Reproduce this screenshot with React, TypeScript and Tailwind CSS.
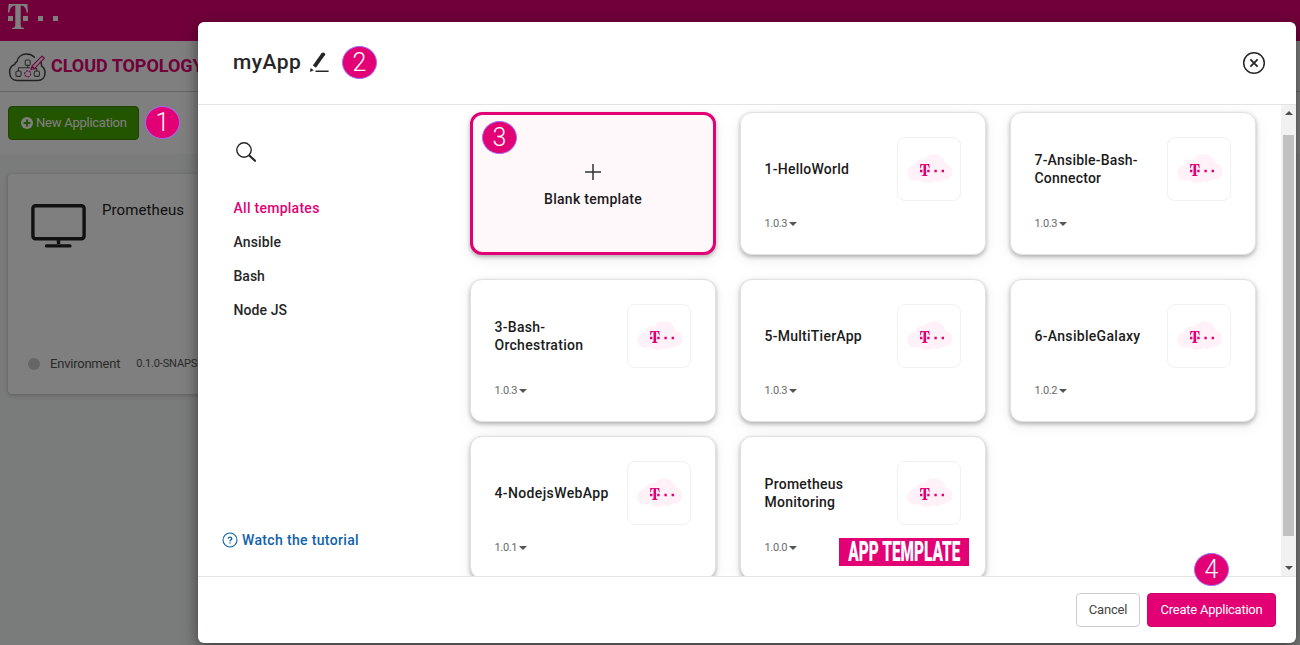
import React from "react";

function TLogo({ className }: { className: string }) {
  return (
    <svg viewBox="0 0 50 25" className={className} fill="currentColor">
      <path d="M0.6 0H19.4L20 8.6H18.6C18.2 4 16.5 1.6 12.7 1.4V21C12.7 23 13.5 23.8 16 23.8V25H4V23.8C6.5 23.8 7.3 23 7.3 21V1.4C3.5 1.6 1.8 4 1.4 8.6H0Z" />
      <path d="M0 12h5v5H0zM15 12h5v5h-5zM30 12h5v5h-5zM45 12h5v5h-5z" />
    </svg>
  );
}

function Badge({ n, className }: { n: number; className: string }) {
  return (
    <span
      className={`absolute z-10 flex h-[33px] w-[35px] items-center justify-center rounded-[50%] border border-[#a06af0] bg-[#e20074] font-[Roboto,sans-serif] text-[25px] font-light leading-none text-white ${className}`}
    >
      {n}
    </span>
  );
}

function TopologyIcon() {
  return (
    <svg viewBox="0 0 38 29" className="mt-[2px] h-[29px] w-[38px] shrink-0" fill="none" strokeLinecap="round" strokeLinejoin="round">
      <path
        d="M26.5 4.2C24.5 2.2 21.7 1 18.5 1C13.7 1 10 4 9.1 8.3C7.7 9.2 7 10.2 6.6 11.5C3 12.8 1.6 15.8 1.6 19C1.6 24 4.5 27.5 9 27.5H29.5C34 27.5 37 24.5 37 20C37 17 35.8 14.6 33.6 13.2C33.6 11.6 33.4 10.2 32.8 9.2"
        stroke="#444"
        strokeWidth="1.5"
      />
      <rect x="17.2" y="7" width="5" height="5.4" rx="1.2" stroke="#555" strokeWidth="1.1" />
      <rect x="7.9" y="18" width="5.2" height="5.4" rx="1.4" stroke="#555" strokeWidth="1.1" />
      <rect x="26.2" y="18" width="5.2" height="5.4" rx="1.4" stroke="#555" strokeWidth="1.1" />
      <path d="M10.4 18V14.8H22M19.7 12.4V14.8M28.8 18V15.6H26.4" stroke="#555" strokeWidth="1.1" />
      <circle cx="19.7" cy="20.8" r="3" stroke="#e20074" strokeWidth="1.2" strokeDasharray="1.2 1.9" />
      <path d="M23 16.8L24 13.2L34 3.2L36.4 5.2L26.4 15.6Z M24 13.2L26.4 15.6" stroke="#e20074" strokeWidth="1.1" />
    </svg>
  );
}

function LogoBox() {
  return (
    <div className="relative flex h-16 w-16 shrink-0 items-center justify-center rounded-lg border border-[#f1f1f1] bg-white">
      <svg viewBox="0 0 46 30" className="ml-[2px] h-[30px] w-[46px]" fill="#fef1f7">
        <circle cx="27" cy="12" r="11.8" />
        <circle cx="15" cy="13" r="7.8" />
        <circle cx="8" cy="19" r="7.8" />
        <circle cx="37.5" cy="17.5" r="8" />
        <circle cx="20" cy="19.5" r="9.7" />
        <circle cx="30" cy="19.5" r="8.5" />
        <path d="M8 15h30v10.5H8z" />
      </svg>
      <TLogo className="absolute left-[21.5px] top-[26px] h-[12px] w-[24px] text-[#e20074]" />
    </div>
  );
}

const cardBase =
  "h-[143px] w-[246px] rounded-xl shadow-[0_2px_4px_rgba(0,0,0,0.28),0_4px_16px_rgba(0,0,0,0.07)]";

type Item = { lines: string[]; version: string; track?: string };

function TemplateCard({ item }: { item: Item }) {
  return (
    <div className={`${cardBase} flex flex-col border border-[#e2e2e2] bg-white pl-[23.5px] pr-6 pt-6`}>
      <div className="flex h-16 items-center justify-between">
        <div className={`text-[14px] font-medium leading-[18px] text-[#1b1b1b] ${item.track ?? "tracking-[0.25px]"}`}>
          {item.lines.map((l) => (
            <div key={l} className="whitespace-nowrap">{l}</div>
          ))}
        </div>
        <LogoBox />
      </div>
      <div className="mt-[15px] flex h-4 items-center text-[11px] leading-4 text-[#6a6a6a]">
        <span className="tracking-[-0.35px]">{item.version}</span>
        <svg viewBox="0 0 8 4" className="-mt-px ml-[2px] h-[4px] w-[8px]" fill="#555">
          <path d="M0 0h8L4 4z" />
        </svg>
      </div>
    </div>
  );
}

const rowOne: Item[] = [
  { lines: ["1-HelloWorld"], version: "1.0.3" },
  { lines: ["7-Ansible-Bash-", "Connector"], version: "1.0.3", track: "tracking-[0.2px]" },
];
const rowTwo: Item[] = [
  { lines: ["3-Bash-", "Orchestration"], version: "1.0.3", track: "tracking-[0.28px]" },
  { lines: ["5-MultiTierApp"], version: "1.0.3" },
  { lines: ["6-AnsibleGalaxy"], version: "1.0.2", track: "tracking-[0.3px]" },
];
const rowThree: Item[] = [
  { lines: ["4-NodejsWebApp"], version: "1.0.1", track: "tracking-[0.37px]" },
  { lines: ["Prometheus", "Monitoring"], version: "1.0.0" },
];

function Background() {
  return (
    <div className="flex h-full flex-col bg-[#f4f7f6]">
      <header className="h-[41px] shrink-0 bg-[#e20074] pl-2 pt-1">
        <TLogo className="h-[25px] w-[50px] text-white" />
      </header>
      <div className="flex h-[51px] shrink-0 items-center border-b border-[#ccc] bg-white pl-2">
        <TopologyIcon />
        <span className="-mt-[2px] ml-[5px] whitespace-nowrap text-[18px] font-bold tracking-[-0.05px] text-[#e20074]">CLOUD TOPOLOGY</span>
      </div>
      <div className="h-[62px] shrink-0 bg-white pl-2 pt-[14px]">
        <button className="flex h-[34px] w-[131px] items-center rounded border border-[#3c8500] bg-[#46a800] pl-3 text-[13px] text-white">
          <svg viewBox="0 0 12 12" className="-mt-px mr-[3px] h-3 w-3">
            <circle cx="6" cy="6" r="6" fill="#fff" />
            <path d="M6 2.6v6.8M2.6 6h6.8" stroke="#46a800" strokeWidth="2" />
          </svg>
          <span className="whitespace-nowrap tracking-[-0.25px]">New Application</span>
        </button>
      </div>
      <div className="ml-2 mt-5 flex h-[220px] w-[300px] flex-col justify-between rounded-sm bg-white shadow-[0_1px_4px_rgba(0,0,0,0.25)]">
        <div className="flex pl-[23px] pt-[26px]">
          <svg viewBox="0 0 56 48" className="h-12 w-14" fill="none" stroke="#222" strokeWidth="3.4">
            <rect x="1.9" y="5.7" width="51.2" height="33" rx="2.6" />
            <path d="M27.5 38v6" />
            <path d="M15.5 45.9h23.4" strokeLinecap="round" />
          </svg>
          <span className="ml-[15px] text-[15px] leading-5 tracking-[0.1px] text-[#222]">Prometheus</span>
        </div>
        <div className="flex items-center pb-[20px] pl-5 text-[#555]">
          <span className="-mt-px h-3 w-3 rounded-full bg-[#ccc]" />
          <span className="ml-[10px] text-[13px] leading-5 tracking-[-0.22px]">Environment</span>
          <span className="ml-[16px] text-[11px] leading-5 tracking-[-0.15px]">0.1.0-SNAPSHOT</span>
        </div>
      </div>
    </div>
  );
}

export default function App() {
  return (
    <div className="relative h-[645px] w-[1300px] overflow-hidden font-[Roboto,sans-serif]">
      <Background />
      <div className="absolute inset-0 bg-black/50" />
      <div className="absolute left-[198px] top-[22px] flex h-[621px] w-[1098px] flex-col overflow-hidden rounded-md bg-white shadow-[0_5px_15px_rgba(0,0,0,0.5)]">
        <div className="flex h-[83px] shrink-0 items-center justify-between border-b border-[#e3e3e3] pl-[35px] pr-[30px]">
          <div className="-mt-[3px] flex items-center">
            <h1 className="text-[21px] font-medium leading-6 tracking-[0.45px] text-[#262626]">myApp</h1>
            <svg viewBox="0 0 20 20" className="ml-[8px] h-5 w-5">
              <path d="M14.2 2.2L5.4 14.6" stroke="#262626" strokeWidth="3.8" />
              <circle cx="14.2" cy="2.3" r="1.9" fill="#262626" />
              <path d="M1.6 16.1L4.8 18.3L1 20Z" fill="#262626" />
              <path d="M6.5 19.3H19.6" stroke="#262626" strokeWidth="1.4" />
            </svg>
          </div>
          <svg viewBox="0 0 24 24" className="h-6 w-6" fill="none" stroke="#262626">
            <circle cx="12" cy="12" r="10.3" strokeWidth="1.5" />
            <path d="M8.4 8.4l7.2 7.2M15.6 8.4l-7.2 7.2" strokeWidth="1.8" />
          </svg>
        </div>
        <div className="flex h-[471px] shrink-0">
          <aside className="flex w-[256px] shrink-0 flex-col pl-[35.5px]">
            <svg viewBox="0 0 20 20" className="ml-[2px] mt-[37px] h-5 w-5 shrink-0" fill="none" stroke="#262626">
              <circle cx="8" cy="8" r="7.2" strokeWidth="1.4" />
              <path d="M13.6 13.8l5.4 5" strokeWidth="2.2" strokeLinecap="round" />
            </svg>
            <nav className="mt-[36px] flex flex-col gap-[14px] text-[14px] font-medium leading-5 text-[#262626]">
              <span className="tracking-[0.27px] text-[#e20074]">All templates</span>
              <span className="tracking-[0.15px]">Ansible</span>
              <span>Bash</span>
              <span className="tracking-[0.1px]">Node JS</span>
            </nav>
            <a className="-ml-[11.5px] mb-[26px] mt-auto flex items-center text-[14px] font-medium leading-5 tracking-[0.34px] text-[#0f62ac]">
              <svg viewBox="0 0 16 16" className="mr-1 h-4 w-4" fill="none" stroke="#0f62ac">
                <circle cx="8" cy="8" r="7" strokeWidth="1.1" />
                <path d="M6.3 6.7c0-2.2 3.5-2.2 3.5 0 0 1.2-1.8 1.2-1.8 2.5M8 10.2v1.3" strokeWidth="1.3" />
              </svg>
              Watch the tutorial
            </a>
          </aside>
          <main className="flex flex-1 flex-col overflow-hidden pl-4 pt-[7px]">
            <div className="flex shrink-0 gap-6">
              <div className={`${cardBase} flex flex-col items-center border-[3px] border-[#e20074] bg-[#fff8fb] pt-[49px]`}>
                <svg viewBox="0 0 16 16" className="h-4 w-4" stroke="#333" strokeWidth="1.5">
                  <path d="M8 0v16M0 8h16" />
                </svg>
                <span className="mt-[9px] text-[14px] font-medium leading-5 tracking-[0.27px] text-[#1b1b1b]">Blank template</span>
              </div>
              {rowOne.map((i) => <TemplateCard key={i.lines[0]} item={i} />)}
            </div>
            <div className="mt-6 flex shrink-0 gap-6">
              {rowTwo.map((i) => <TemplateCard key={i.lines[0]} item={i} />)}
            </div>
            <div className="mt-[14px] flex shrink-0 gap-6">
              {rowThree.map((i) => <TemplateCard key={i.lines[0]} item={i} />)}
            </div>
          </main>
          <div className="flex w-[15px] shrink-0 flex-col items-center bg-[#f1f1f1] py-[6px]">
            <svg viewBox="0 0 8 4" className="h-1 w-2" fill="#505050"><path d="M0 4h8L4 0z" /></svg>
            <div className="mt-5 h-[401px] w-[11px] bg-[#c1c1c1]" />
            <svg viewBox="0 0 8 4" className="mt-auto h-1 w-2" fill="#505050"><path d="M0 0h8L4 4z" /></svg>
          </div>
        </div>
        <div className="flex flex-1 items-start justify-end gap-[7px] border-t border-[#e3e3e3] pr-5 pt-4 text-[13px]">
          <button className="h-[34px] w-16 rounded border border-[#ccc] bg-white tracking-[-0.15px] text-[#444]">Cancel</button>
          <button className="h-[34px] w-[129px] whitespace-nowrap rounded border border-[#d0006b] bg-[#e20074] tracking-[-0.25px] text-white">Create Application</button>
        </div>
      </div>
      <Badge n={1} className="left-[145px] top-[106px]" />
      <Badge n={2} className="left-[342px] top-[46px]" />
      <Badge n={3} className="left-[482px] top-[121px]" />
      <Badge n={4} className="left-[1194px] top-[553px]" />
      <div className="absolute left-[839px] top-[538px] flex h-7 w-[130px] items-center justify-center bg-[#e20074]">
        <span className="scale-x-[0.57] whitespace-nowrap text-[27px] font-black leading-7 text-white">APP TEMPLATE</span>
      </div>
    </div>
  );
}
